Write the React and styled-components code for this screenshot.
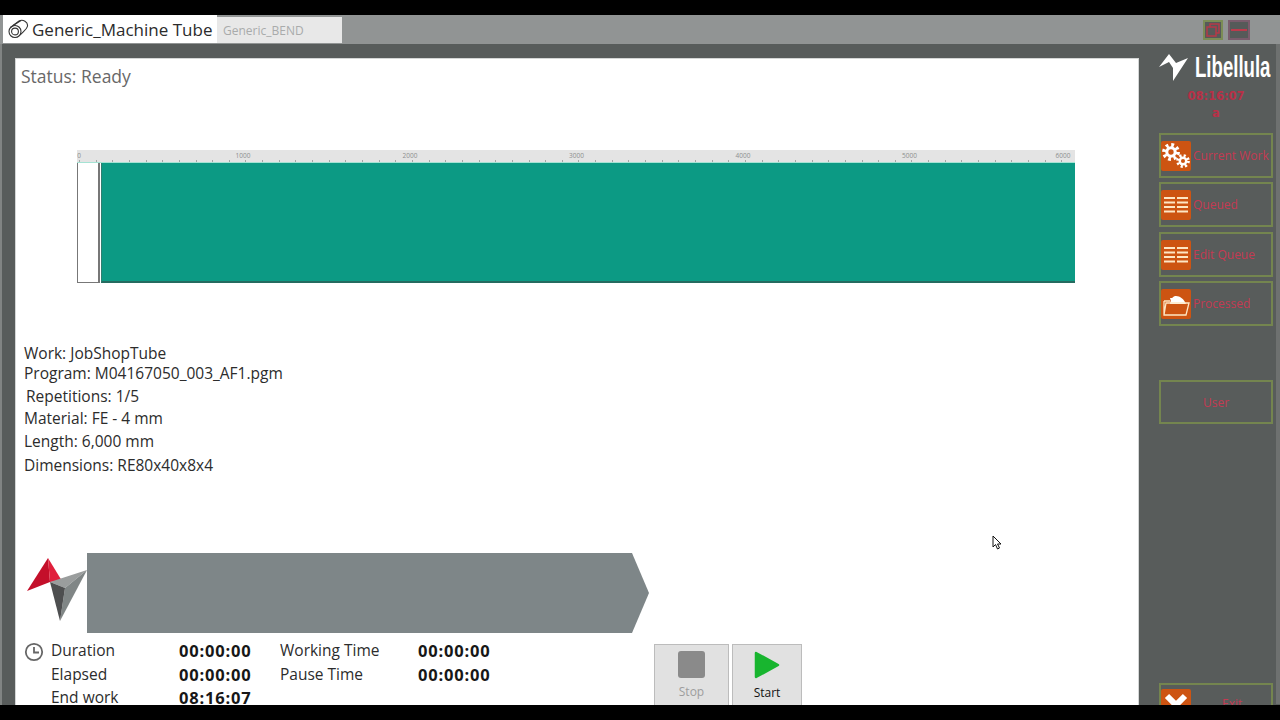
import React from "react";
import styled, { createGlobalStyle } from "styled-components";

const Global = createGlobalStyle`
  html, body { margin: 0; padding: 0; background: #000; overflow: hidden; }
  * { box-sizing: border-box; }
`;
const Screen = styled.div`
  position: relative; width: 1280px; height: 720px; background: #000; overflow: hidden;
  display: flex; flex-direction: column; font-family: "Open Sans", "Noto Sans", sans-serif;
`;
const Letterbox = styled.div`height: ${p => p.$h}px; flex: none; background: #000;`;
const Window = styled.div`flex: 1; min-height: 0; overflow: hidden; background: #585c5b; display: flex; flex-direction: column;`;
const TitleBar = styled.header`
  height: 29px; flex: none; background: #919494; display: flex; align-items: flex-start; padding-left: 3px;
`;
const TitleTab = styled.div`
  width: 214px; height: 28px; background: #fff; display: flex; align-items: center; gap: 3px; padding-left: 5px;
  font-size: 17px; color: #2b2b2b; white-space: nowrap;
`;
const SubTab = styled.div`
  width: 125px; height: 26px; margin-top: 2px; background: #e8e8e8; color: #a9abab; font-size: 12px;
  display: flex; align-items: center; padding-left: 6px;
`;
const WinControls = styled.div`margin-left: auto; display: flex; gap: 5px; padding: 5px 30px 0 0;`;
const WinBtn = styled.div`
  width: ${p => p.$w}px; height: 20px; background: #565a59; border: 2px solid ${p => p.$edge};
  display: flex; align-items: center; justify-content: center;
`;
const Body = styled.div`flex: 1; min-height: 0; display: flex; align-items: flex-start; border-left: 2px solid #818483;`;
const Panel = styled.main`
  width: 1124px; height: 660px; margin: 14px 0 0 13px; background: #fff; border: 1px solid #d4d6d6; flex: none;
  padding-top: 6px;
`;
const Status = styled.div`font-size: 17.5px; line-height: 22px; color: #686868; padding-left: 5px;`;
const Viewer = styled.section`margin: 63px 0 0 61px; width: 998px;`;
const Ruler = styled.div`
  position: relative; height: 13px; background: #e4e4e4; border-bottom: 1px solid #a5e3d4;
`;
const Ticks = styled.div`
  position: absolute; left: 2px; right: 0; bottom: 0; height: 2px;
  background: repeating-linear-gradient(to right, #a3a7a6 0 1px, transparent 1px 16.65px);
`;
const RulerLabel = styled.span`
  position: absolute; top: 2px; transform: translateX(-50%); font-size: 6.5px; line-height: 8px; color: #8d8f8f;
`;
const TubeRow = styled.div`display: flex; height: 120px; gap: 1px;`;
const TubeEnd = styled.div`width: 23px; background: #fff; border: 1px solid #777; border-top: none; border-right-width: 2px;`;
const TubeBody = styled.div`flex: 1; background: #0c9a84; border-bottom: 2px solid #266b60; border-left: 1px solid #2f7f71;`;
const Info = styled.section`margin-top: 60px; padding-left: 8px; font-size: 15.5px; color: #2c2c2c;`;
const InfoLine = styled.div`height: ${p => p.$h}px; line-height: 20px; white-space: nowrap; padding-left: ${p => p.$in || 0}px;`;
const ArrowRow = styled.section`margin: 78px 0 0 11px; display: flex; align-items: flex-start;`;
const LogoSlot = styled.div`flex: none; width: 60px; padding-top: 5px;`;
const Arrow = styled.div`
  width: 562px; height: 80px; background: #7e8688;
  clip-path: polygon(0 0, 545px 0, 100% 50%, 545px 100%, 0 100%);
`;
const Bottom = styled.section`margin-top: 2px; display: flex; align-items: flex-start;`;
const ClockSlot = styled.div`width: 35px; padding: 7px 0 0 8px; flex: none;`;
const TimeGrid = styled.div`
  width: 603px; flex: none; display: grid; grid-template-columns: 128px 101px 138px 100px; grid-auto-rows: 23.5px;
  font-size: 15.5px; color: #2c2c2c; line-height: 23.5px; padding-top: 4px; white-space: nowrap;
`;
const TimeValue = styled.div`font-weight: 700; font-size: 16.5px; letter-spacing: .8px; color: #171717;`;
const Actions = styled.div`display: flex; gap: 3px; height: 70px; margin-top: 9px;`;
const Action = styled.button`
  width: ${p => p.$w}px; height: 70px; background: #e1e1e1; border: 1px solid #bcbcbc; padding: 6px 0 0; font: inherit;
  font-size: 12px; color: ${p => p.$muted ? "#9d9d9d" : "#111"}; display: flex; flex-direction: column; align-items: center;
  gap: 6px; line-height: 16px;
`;
const Sidebar = styled.aside`
  flex: 1; padding: 7px 3px 0 20px; display: flex; flex-direction: column; align-items: stretch; border-right: 4px solid #6e7170;
  height: 660px;
`;
const Brand = styled.div`display: flex; align-items: center; height: 32px; color: #fff;`;
const BrandName = styled.span`
  font-family: "Liberation Sans", sans-serif; font-weight: 700; font-size: 30px; line-height: 32px;
  transform: scaleX(.62); transform-origin: left center; white-space: nowrap; margin-left: 6px; width: 76px;
`;
const Clock = styled.div`
  font-family: "DejaVu Sans", sans-serif; font-weight: 700; font-size: 11.5px; line-height: 17px; color: #b83047;
  text-align: center; margin-top: ${p => p.$mt || 0}px;
`;
const NavList = styled.nav`display: flex; flex-direction: column; margin-top: 11px;`;
const NavButton = styled.div`
  height: ${p => p.$h || 45}px; margin-top: ${p => p.$mt || 0}px; border: 2px solid #74854f; display: flex;
  align-items: ${p => p.$top ? "flex-start" : "center"}; justify-content: ${p => p.$center ? "center" : "flex-start"};
  gap: 2px; padding-top: ${p => p.$top ? 4 : 0}px; color: #c43a52; font-size: 12px; white-space: nowrap;
`;
const IconTile = styled.div`width: 30px; height: 30px; flex: none; background: #cd5412; border-radius: 2px; display: flex; align-items: center; justify-content: center;`;
const ExitLabel = styled.span`margin: 6px 0 0 29px;`;

const Gear = ({ cx, cy, r, teeth }) => {
  const c = 2 * Math.PI * r;
  return (
    <g>
      <circle cx={cx} cy={cy} r={r} fill="none" stroke="#fff" strokeWidth={r * .55} strokeDasharray={`${c / teeth / 2} ${c / teeth / 2}`} />
      <circle cx={cx} cy={cy} r={r * .82} fill="#fff" />
      <circle cx={cx} cy={cy} r={r * .38} fill="#cd5412" />
    </g>
  );
};
const GearsIcon = () => (
  <svg width="30" height="30" viewBox="0 0 30 30"><Gear cx={10} cy={11} r={7} teeth={8} /><Gear cx={22} cy={20} r={5.4} teeth={8} /></svg>
);
const ListIcon = () => (
  <svg width="30" height="30" viewBox="0 0 30 30" stroke="#fde6c4" strokeWidth="2">
    {[8, 12.5, 17, 21.5].map(y => <path key={y} d={`M3 ${y}H14M16 ${y}H27`} />)}
  </svg>
);
const FolderIcon = () => (
  <svg width="30" height="30" viewBox="0 0 30 30">
    <path d="M9 15 C10 8 13 7 15 7 C19 7 23 10 25 15Z" fill="#fff" />
    <path d="M9 9 L13 9 L11 15 Z" fill="#fff" />
    <path d="M3 12 H9 M3 12 V26 H25 L28 14 H5 L3 26" fill="none" stroke="#fde6c4" strokeWidth="1.3" />
  </svg>
);
const ExitIcon = () => (
  <svg width="30" height="30" viewBox="0 0 30 30"><path d="M6 7 L24 25 M24 7 L6 25" stroke="#fff" strokeWidth="6" fill="none" /></svg>
);
const TubeIcon = () => (
  <svg width="21" height="20" viewBox="0 0 21 20" fill="none" stroke="#333" strokeWidth="1.1">
    <circle cx="7" cy="12.5" r="6" />
    <circle cx="7" cy="12.5" r="3.4" />
    <path d="M2.5 8.5 L11 2 C15 0 20 3 19.5 7 C19 10 17 11 12 16" />
    <path d="M5 6.5 L13 1.5" />
  </svg>
);
const BrandMark = () => (
  <svg width="30" height="29" viewBox="0 0 30 29" style={{ flex: "none" }}>
    <path d="M0 14 L10 1 L17 10 L29 5 L14 28 L14 15 L10 9 Z" fill="#fff" />
  </svg>
);
const Logo = () => (
  <svg width="60" height="64" viewBox="0 0 60 64" style={{ display: "block" }}>
    <path d="M0 33 L21 0 L23 24 Z" fill="#c40f2a" />
    <path d="M21 0 L35 23 L23 24 Z" fill="#e0203c" />
    <path d="M23 24 L60 12 L38 30 Z" fill="#9a9d9d" />
    <path d="M38 30 L60 12 L33 63 Z" fill="#808686" />
    <path d="M23 24 L38 30 L33 63 Z" fill="#4e4f50" />
  </svg>
);
const ClockIcon = () => (
  <svg width="20" height="20" viewBox="0 0 20 20" fill="none" stroke="#666" strokeWidth="1.8" style={{ display: "block" }}>
    <circle cx="10" cy="10" r="8.2" /><path d="M10 5 V10.5 H15" />
  </svg>
);
const Pointer = styled.svg`position: absolute; left: 992px; top: 535px;`;

const rows = [
  ["Duration", "00:00:00", "Working Time", "00:00:00"],
  ["Elapsed", "00:00:00", "Pause Time", "00:00:00"],
  ["End work", "08:16:07", "", ""],
];
const marks = [[2, "0"], [166, "1000"], [333, "2000"], [499.5, "3000"], [666, "4000"], [832.5, "5000"], [986, "6000"]];

export default function App() {
  return (
    <Screen>
      <Global />
      <Letterbox $h={15} />
      <Window>
        <TitleBar>
          <TitleTab><TubeIcon />Generic_Machine Tube</TitleTab>
          <SubTab>Generic_BEND</SubTab>
          <WinControls>
            <WinBtn $w={20} $edge="#7b8c55">
              <svg width="14" height="14" viewBox="0 0 14 14" fill="none" stroke="#b53a48" strokeWidth="1.5"><rect x="1" y="4" width="9" height="9" /><path d="M4 4 V1 H13 V10 H10" /></svg>
            </WinBtn>
            <WinBtn $w={22} $edge="#7a5c6c">
              <svg width="16" height="4" viewBox="0 0 16 4"><rect y="1" width="16" height="2" fill="#bd3a4c" /></svg>
            </WinBtn>
          </WinControls>
        </TitleBar>
        <Body>
          <Panel>
            <Status>Status: Ready</Status>
            <Viewer>
              <Ruler>
                {marks.map(([x, t]) => <RulerLabel key={t} style={{ left: x }}>{t}</RulerLabel>)}
                <Ticks />
              </Ruler>
              <TubeRow><TubeEnd /><TubeBody /></TubeRow>
            </Viewer>
            <Info>
              <InfoLine $h={20}>Work: JobShopTube</InfoLine>
              <InfoLine $h={23}>Program: M04167050_003_AF1.pgm</InfoLine>
              <InfoLine $h={22} $in={2}>Repetitions: 1/5</InfoLine>
              <InfoLine $h={23}>Material: FE - 4 mm</InfoLine>
              <InfoLine $h={24}>Length: 6,000 mm</InfoLine>
              <InfoLine $h={20}>Dimensions: RE80x40x8x4</InfoLine>
            </Info>
            <ArrowRow><LogoSlot><Logo /></LogoSlot><Arrow /></ArrowRow>
            <Bottom>
              <ClockSlot><ClockIcon /></ClockSlot>
              <TimeGrid>
                {rows.map((r) => (
                  <React.Fragment key={r[0]}>
                    <div>{r[0]}</div><TimeValue>{r[1]}</TimeValue><div>{r[2]}</div><TimeValue>{r[3]}</TimeValue>
                  </React.Fragment>
                ))}
              </TimeGrid>
              <Actions>
                <Action $w={75} $muted>
                  <svg width="27" height="27" viewBox="0 0 27 27"><rect width="27" height="27" rx="3" fill="#8a8a8a" /></svg>
                  Stop
                </Action>
                <Action $w={70}>
                  <svg width="26" height="28" viewBox="0 0 26 28"><path d="M2 2 L24 14 L2 26 Z" fill="#18b52f" stroke="#18b52f" strokeWidth="2.5" strokeLinejoin="round" /></svg>
                  Start
                </Action>
              </Actions>
            </Bottom>
          </Panel>
          <Sidebar>
            <Brand><BrandMark /><BrandName>Libellula</BrandName></Brand>
            <Clock $mt={5}>08:16:07</Clock>
            <Clock>a</Clock>
            <NavList>
              <NavButton><IconTile><GearsIcon /></IconTile>Current Work</NavButton>
              <NavButton $mt={4}><IconTile><ListIcon /></IconTile>Queued</NavButton>
              <NavButton $mt={5}><IconTile><ListIcon /></IconTile>Edit Queue</NavButton>
              <NavButton $mt={4}><IconTile><FolderIcon /></IconTile>Processed</NavButton>
              <NavButton $mt={54} $h={44} $center>User</NavButton>
              <NavButton $mt={259} $top $h={60}><IconTile><ExitIcon /></IconTile><ExitLabel>Exit</ExitLabel></NavButton>
            </NavList>
          </Sidebar>
        </Body>
      </Window>
      <Letterbox $h={15} />
      <Pointer width="10" height="15" viewBox="0 0 10 15">
        <path d="M1 1 V12 L3.5 9.5 L5.5 14 L7.5 13 L5.5 9 H9 Z" fill="#fff" stroke="#111" strokeWidth="1" />
      </Pointer>
    </Screen>
  );
}
